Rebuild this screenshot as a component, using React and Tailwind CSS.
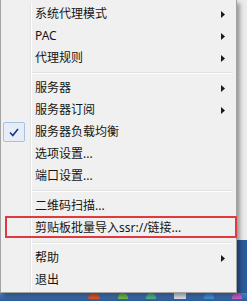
import { Fragment } from 'react'

// 托盘右键菜单(Win7 风格)
const items = [
  { label: '系统代理模式', sub: true },
  { label: 'PAC', sub: true },
  { label: '代理规则', sub: true },
  { sep: true },
  { label: '服务器', sub: true },
  { label: '服务器订阅', sub: true },
  { label: '服务器负载均衡', checked: true },
  { label: '选项设置...' },
  { label: '端口设置...' },
  { sep: true },
  { label: '二维码扫描...' },
  { label: '剪贴板批量导入ssr://链接...' },
  { sep: true },
  { label: '帮助', sub: true },
  { label: '退出' },
]

function Arrow() {
  return (
    <svg width="4" height="7" viewBox="0 0 4 7" className="mr-[11px]">
      <path d="M0 0 L4 3.5 L0 7 Z" fill="#1a1a1a" />
    </svg>
  )
}

function Check() {
  return (
    <div className="ml-[2px] w-[22px] h-[20px] rounded-[2px] border border-[#a9c1e0] bg-[#e6edf7] flex items-center justify-center">
      <svg width="10" height="9" viewBox="0 0 10 9">
        <path d="M1 4.5 L3.8 7.5 L9 1" fill="none" stroke="#1f3487" strokeWidth="1.6" />
      </svg>
    </div>
  )
}

function Row({ item }) {
  if (item.sep) {
    return (
      <div className="flex h-[8px]">
        <div className="w-[30px] h-full border-r border-[#e2e3e3]" />
        <div className="flex-1 h-full border-l border-white pt-[3px] pr-[3px]">
          <div className="h-px bg-[#e0e0e0]" />
          <div className="h-px bg-white" />
        </div>
      </div>
    )
  }
  return (
    <div className="flex h-[22px]">
      <div className="w-[30px] h-full border-r border-[#e2e3e3] flex items-center">
        {item.checked && <Check />}
      </div>
      <div className="flex-1 h-full border-l border-white flex items-center pl-[3px]">
        <span className="flex-1 text-[12px] leading-none text-[#151515] whitespace-nowrap">{item.label}</span>
        {item.sub && <Arrow />}
      </div>
    </div>
  )
}

export default function App() {
  return (
    <div
      className="w-[247px] h-[301px] overflow-hidden relative flex flex-col bg-[#2d5f9f]"
      style={{ fontFamily: '"Noto Sans", "Noto Sans CJK SC", sans-serif' }}
    >
      <div className="flex h-[293px]">
        {/* 菜单 */}
        <div className="w-[237px] h-full relative z-10 bg-[#f0f0f0] border-x border-b border-[#a3a3a3] shadow-[3px_3px_4px_rgba(0,0,0,0.35)] pt-[3px] flex flex-col">
          {items.map((item, i) => (
            <Fragment key={i}>
              <Row item={item} />
            </Fragment>
          ))}
        </div>
        {/* 桌面 */}
        <div className="flex-1 flex flex-col">
          <div className="h-[240px] bg-[#ebebeb]" />
          <div className="flex-1 bg-[#2a5b9b]" />
        </div>
      </div>

      {/* 任务栏 */}
      <div className="flex-1 flex items-start gap-[18px] pl-[88px] bg-gradient-to-b from-[#4a7dbd] to-[#2c5c9a]">
        <div className="w-[12px] h-[6px] rounded-t-full bg-[#d9552c]" />
        <div className="w-[10px] h-[6px] rounded-t-full bg-[#6ab84a]" />
        <div className="w-[10px] h-[6px] rounded-t-full bg-[#4fb08c]" />
        <div className="w-[12px] h-[6px] bg-[#d8dde4]" />
        <div className="w-[10px] h-[6px] rounded-t-full bg-[#3f8fd8]" />
        <div className="w-[10px] h-[6px] rounded-t-full bg-[#c75bc0]" />
      </div>

      {/* 红色标注框 */}
      <div className="absolute left-[5px] top-[216px] w-[232px] h-[22px] border-2 border-[#e0393e] z-20" />
    </div>
  )
}
